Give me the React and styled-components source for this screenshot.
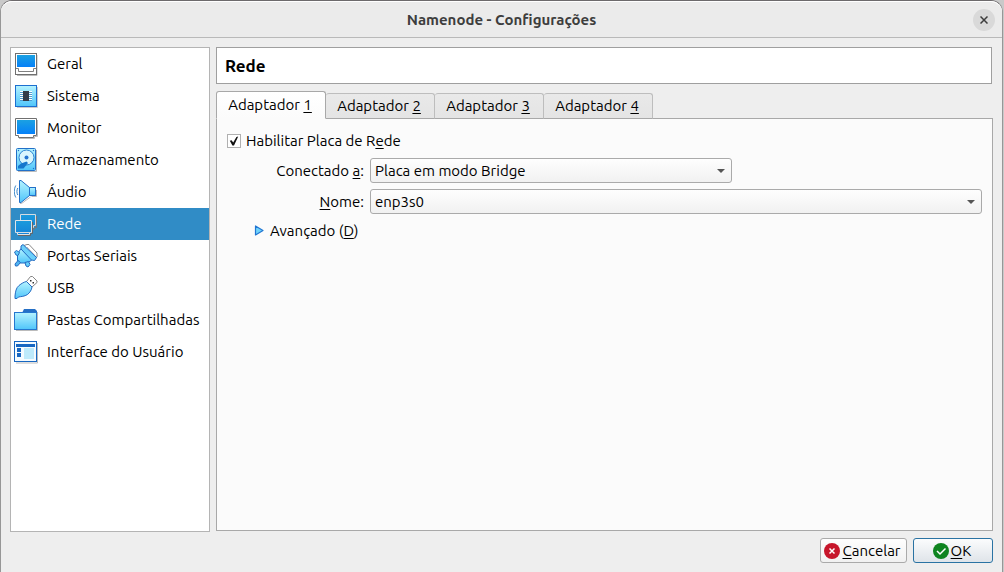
import React, { useState } from "react";
import styled, { createGlobalStyle } from "styled-components";

const GlobalStyle = createGlobalStyle`
  *, *::before, *::after { box-sizing: border-box; }
  body { margin: 0; background: #c9c9c9; }
  body, button, select, input {
    font-family: Ubuntu, "Noto Sans", sans-serif;
    font-size: 15px;
    line-height: 20px;
    color: #000;
  }
`;

const Dialog = styled.main`
  display: flex;
  flex-direction: column;
  min-height: 100vh;
  margin-right: 1px;
  background: #eeeeee;
  border: 1px solid #979797;
  border-top-color: #6d6a6c;
  border-bottom: 0;
  border-radius: 12px 12px 0 0;
`;

const TitleBar = styled.header`
  display: grid;
  grid-template-columns: 1fr auto 1fr;
  align-items: center;
  height: 37px;
  padding: 0 7px;
  background: #ebebeb;
  border-top: 1px solid #fff;
  border-bottom: 1px solid #b9b9b9;
  border-radius: 11px 11px 0 0;
`;

const Title = styled.h1`
  grid-column: 2;
  margin: 0;
  font-size: 15px;
  line-height: 20px;
  font-weight: 700;
  color: #3d3d3d;
`;

const CloseButton = styled.button`
  justify-self: end;
  display: grid;
  place-items: center;
  width: 22px;
  height: 22px;
  padding: 0;
  border: 0;
  border-radius: 50%;
  background: #d9d9d9;
`;

const Body = styled.div`
  flex: 1;
  display: flex;
  gap: 6px;
  padding: 9px 9px 6px;
`;

const Sidebar = styled.nav`
  flex: 0 0 200px;
  background: #fff;
  border: 1px solid #b4b4b4;
`;

const NavList = styled.ul`
  list-style: none;
  margin: 0;
  padding: 0;
`;

const NavLink = styled.a`
  display: flex;
  align-items: center;
  gap: 9px;
  height: 32px;
  padding: 0 3px;
  line-height: 22px;
  white-space: nowrap;
  text-decoration: none;
  color: ${(p) => (p.$active ? "#fff" : "#000")};
  background: ${(p) => (p.$active ? "#308cc6" : "transparent")};

  svg { flex: none; }
`;

const Content = styled.section`
  flex: 1;
  min-width: 0;
  display: flex;
  flex-direction: column;
  gap: 7px;
`;

const PageHeading = styled.h2`
  margin: 0 1px 0 0;
  padding: 0 8px;
  height: 37px;
  line-height: 36px;
  font-size: 17px;
  font-weight: 700;
  background: #fff;
  border: 1px solid #9f9f9f;
`;

const TabArea = styled.div`
  flex: 1;
  display: flex;
  flex-direction: column;
`;

const TabList = styled.div`
  display: flex;
  align-items: flex-end;
  height: 28px;
  margin-bottom: -1px;
`;

const Tab = styled.button`
  position: relative;
  width: 109px;
  height: ${(p) => (p.$active ? 28 : 26)}px;
  padding: 0 2px 0 0;
  white-space: nowrap;
  background: ${(p) =>
    p.$active ? "linear-gradient(#fff, #fbfbfb)" : "linear-gradient(#e9e9e9, #e4e4e4)"};
  border: 1px solid ${(p) => (p.$active ? "#a8a8a8" : "#bdbdbd")};
  border-bottom-color: ${(p) => (p.$active ? "#fbfbfb" : "#a8a8a8")};
  border-left-width: ${(p) => (p.$active ? 1 : 0)}px;
  border-radius: 3px 3px 0 0;

  &:first-child { width: 110px; }
`;

const TabPanel = styled.div`
  flex: 1;
  padding: 12px 10px;
  margin-bottom: 1px;
  background: #fbfbfb;
  border: 1px solid #a8a8a8;
`;

const CheckRow = styled.label`
  display: flex;
  align-items: center;
  gap: 5px;
`;

const CheckBox = styled.input`
  appearance: none;
  display: grid;
  place-items: center;
  width: 14px;
  height: 14px;
  margin: 0;
  background: #fff;
  border: 1px solid #b0b0b0;

  &:checked::before {
    content: "";
    width: 10px;
    height: 10px;
    background: #111;
    clip-path: polygon(8% 48%, 26% 42%, 42% 66%, 74% 10%, 92% 4%, 50% 96%, 34% 96%);
  }
`;

const FieldGrid = styled.div`
  display: grid;
  grid-template-columns: 137px 1fr;
  align-items: center;
  gap: 6px;
  margin-top: 7px;
`;

const FieldLabel = styled.label`
  text-align: right;
`;

const SelectBox = styled.div`
  position: relative;
  width: ${(p) => p.$width};
  max-width: 100%;

  &::after {
    content: "";
    position: absolute;
    right: 7px;
    top: 11px;
    border: 4px solid transparent;
    border-top-color: #555;
    border-bottom: 0;
    pointer-events: none;
  }
`;

const Select = styled.select`
  appearance: none;
  display: block;
  width: 100%;
  height: 25px;
  padding: 0 20px 0 4px;
  background: linear-gradient(#fefefe, #f1f1f1);
  border: 1px solid #aaa;
  border-radius: 3px;
`;

const Disclosure = styled.button`
  display: flex;
  align-items: center;
  gap: 6px;
  margin: 7px 0 0 27px;
  padding: 0;
  background: none;
  border: 0;
`;

const Footer = styled.footer`
  display: flex;
  justify-content: flex-end;
  gap: 6px;
  padding: 0 9px 9px;
`;

const ActionButton = styled.button`
  display: flex;
  align-items: center;
  justify-content: center;
  gap: 2px;
  min-width: ${(p) => (p.$primary ? 80 : 87)}px;
  height: 25px;
  padding: 0 5px 0 3px;
  background: ${(p) =>
    p.$primary ? "linear-gradient(#fbfcfd, #dfe4e9)" : "linear-gradient(#fefefe, #f1f1f1)"};
  border: 1px solid ${(p) => (p.$primary ? "#2a73a3" : "#aaa")};
  border-radius: 3px;
`;

const Key = styled.span`
  text-decoration: underline;
  text-decoration-thickness: 1px;
  text-underline-offset: 2px;
  text-decoration-skip-ink: none;
`;

function Icon({ children }) {
  return (
    <svg width="24" height="24" viewBox="0 0 24 24" fill="none" aria-hidden="true">
      {children}
    </svg>
  );
}

function Gradients() {
  return (
    <svg width="0" height="0" style={{ position: "absolute" }} aria-hidden="true">
      <defs>
        <linearGradient id="screen" x1="0" y1="0" x2="0" y2="1">
          <stop offset="0" stopColor="#1ba1e2" />
          <stop offset="1" stopColor="#0580f8" />
        </linearGradient>
        <linearGradient id="aqua" x1="0" y1="0" x2="0" y2="1">
          <stop offset="0" stopColor="#b5f3ff" />
          <stop offset="1" stopColor="#4fc5fa" />
        </linearGradient>
        <linearGradient id="dim" x1="0" y1="0" x2="0" y2="1">
          <stop offset="0" stopColor="#1c9bdc" />
          <stop offset="1" stopColor="#1583d8" />
        </linearGradient>
      </defs>
    </svg>
  );
}

const icons = {
  general: (
    <Icon>
      <path d="M23 3v20.5H3" stroke="#bbb" />
      <rect x="1.5" y="1.5" width="21" height="21" fill="#fff" stroke="#707070" />
      <rect x="3" y="3" width="18" height="12" fill="url(#screen)" />
      <path d="M2 16.5h2.5v3h15v-3H22" stroke="#808080" />
    </Icon>
  ),
  system: (
    <Icon>
      <path d="M23.5 3v20.5H3" stroke="#ccc" />
      <rect x="1.5" y="1.5" width="21" height="21" fill="url(#aqua)" stroke="#1c6fd0" />
      <path d="M6 7.5h12M6 9.5h12M6 11.5h12M6 13.5h12M6 15.5h12" stroke="#fff" />
      <path d="M6 8.5h12M6 10.5h12M6 12.5h12M6 14.5h12M6 16.5h12" stroke="#4d9bd0" />
      <rect x="9" y="7" width="6" height="10" fill="#333b49" />
    </Icon>
  ),
  display: (
    <Icon>
      <path d="M23.5 4v16.5h-3v2H5" stroke="#bbb" />
      <path d="M1.5 2.5h21v17h-3v2h-15v-2h-3z" fill="#fff" stroke="#707070" />
      <rect x="3" y="4" width="18" height="14" fill="url(#screen)" />
    </Icon>
  ),
  storage: (
    <Icon>
      <path d="M22.5 2v21.5H4" stroke="#bbb" />
      <rect x="2.5" y="0.5" width="19" height="22" rx="1" fill="url(#aqua)" stroke="#2270c8" />
      <circle cx="12.500" cy="9.500" r="7.500" fill="#d9f6fe" stroke="#2b83d2" />
      <circle cx="12.500" cy="9.500" r="2" fill="#2574d0" />
      <path d="M12.500 13.500l1.500 1.500-4.500 5.500H4v-2.500l3-2.500z" fill="#1677cd" />
      <circle cx="4.500" cy="2.500" r=".7" fill="#2270c8" />
      <circle cx="19.500" cy="2.500" r=".7" fill="#2270c8" />
      <circle cx="19.500" cy="20.500" r=".7" fill="#2270c8" />
    </Icon>
  ),
  audio: (
    <Icon>
      <path d="M16.5 17l-9 6.500H6M22.5 10v6.500h-5" stroke="#bbb" />
      <rect x="14.5" y="7.5" width="7" height="8" fill="url(#aqua)" stroke="#2270c8" />
      <path d="M5.5.5h1.500l8.500 7v8l-8.500 7H5.500z" fill="url(#aqua)" stroke="#2270c8" />
      <path d="M3.8 8c-1.200 2-1.200 5 0 7M1.800 5.500c-2 3.500-2 8.500 0 12" stroke="#3585ca" />
    </Icon>
  ),
  network: (
    <Icon>
      <path d="M22.5 4v11.500h-2v1.500h-3" stroke="#777" />
      <path d="M6.5 2.500h15v11h-2v2h-11v-2h-2z" fill="url(#dim)" stroke="#d4dce2" />
      <path d="M18.5 10v11.500h-2v2H4" stroke="#666" />
      <path d="M1.5 8.500h16v12h-2v2h-12v-2h-2z" fill="url(#dim)" stroke="#e0e5e9" />
      <path d="M2 20.500h15" stroke="#d5dde3" />
    </Icon>
  ),
  serial: (
    <Icon>
      <path d="M10 1.500l3-1h2l8 8.500v4l-2 2z" fill="#fff" stroke="#8a8a8a" />
      <path d="M13 3l8 8.500" stroke="#bbb" />
      <path d="M3.500 10l3.500-5.500 11.500 11-5 3.500H6.500L3.500 17z" fill="url(#aqua)" stroke="#246bc2" />
      <path d="M7 2l2-1.500L22.500 13.500 20.500 16.500 17.500 16 7 5z" fill="#6dd0fa" stroke="#246bc2" />
      <path d="M.5 8l2-1.500 3 2-1.500 3-2-.5zM11 18.500l3.500-1 1.500 3-2 2.500-2-1z" fill="#65cef9" stroke="#246bc2" />
      <path d="M1 20l3-3.500 2.500 2L3.500 22h-2z" fill="#4fb4f0" stroke="#246bc2" />
    </Icon>
  ),
  usb: (
    <Icon>
      <path d="M12.5 5.500l4-5h2l4.500 4.500v1.500l-5 4.500z" fill="#fff" stroke="#858585" />
      <rect x="16" y="4" width="1.500" height="1.500" fill="#333" />
      <rect x="18.500" y="6" width="1.500" height="1.500" fill="#333" />
      <path d="M1 22.500v-2.500C1.500 15.500 2 12 5 9.500 7.500 7.500 10 6 12.500 5.500l5.500 5.500c-.500 3-2 5.500-4.500 7.500-3 2-6.500 2-9 2.500L3 22.500z" fill="url(#aqua)" stroke="#246bc2" />
    </Icon>
  ),
  folder: (
    <Icon>
      <path d="M23.5 4v18.500H2" stroke="#bbb" />
      <path d="M8 5l2-4h11l2 2v2z" fill="#256fc5" />
      <rect x=".5" y="4.500" width="22" height="17" fill="url(#aqua)" stroke="#2577cf" />
    </Icon>
  ),
  interface: (
    <Icon>
      <path d="M23.5 3v20H2" stroke="#bbb" />
      <rect x=".5" y="1.500" width="22" height="20" fill="#f4fbff" stroke="#1767c2" />
      <rect x="2" y="4" width="19" height="3" fill="#1767c2" />
      <rect x="3" y="8" width="4" height="4" fill="#1767c2" />
      <rect x="3" y="13" width="4" height="4" fill="#1767c2" />
      <rect x="10" y="8" width="10" height="11" fill="#bdeafb" />
    </Icon>
  ),
};

const sections = [
  ["general", "Geral"],
  ["system", "Sistema"],
  ["display", "Monitor"],
  ["storage", "Armazenamento"],
  ["audio", "Áudio"],
  ["network", "Rede"],
  ["serial", "Portas Seriais"],
  ["usb", "USB"],
  ["folder", "Pastas Compartilhadas"],
  ["interface", "Interface do Usuário"],
];

export default function App() {
  const [tab, setTab] = useState(1);
  const [enabled, setEnabled] = useState(true);

  return (
    <>
      <GlobalStyle />
      <Gradients />
      <Dialog>
        <TitleBar>
          <Title>Namenode - Configurações</Title>
          <CloseButton type="button" aria-label="Fechar">
            <svg width="8" height="8" viewBox="0 0 8 8" aria-hidden="true">
              <path d="M.5.5l7 7M7.5.5l-7 7" stroke="#3d3d3d" strokeWidth="1.5" />
            </svg>
          </CloseButton>
        </TitleBar>
        <Body>
          <Sidebar>
            <NavList>
              {sections.map(([id, label]) => (
                <li key={id}>
                  <NavLink
                    href={`#${id}`}
                    $active={id === "network"}
                    aria-current={id === "network" ? "page" : undefined}
                  >
                    {icons[id]}
                    {label}
                  </NavLink>
                </li>
              ))}
            </NavList>
          </Sidebar>
          <Content>
            <PageHeading>Rede</PageHeading>
            <TabArea>
              <TabList role="tablist">
                {[1, 2, 3, 4].map((n) => (
                  <Tab
                    key={n}
                    type="button"
                    role="tab"
                    aria-selected={tab === n}
                    $active={tab === n}
                    onClick={() => setTab(n)}
                  >
                    Adaptador <Key>{n}</Key>
                  </Tab>
                ))}
              </TabList>
              <TabPanel role="tabpanel">
                <CheckRow>
                  <CheckBox
                    type="checkbox"
                    checked={enabled}
                    onChange={(e) => setEnabled(e.target.checked)}
                  />
                  <span>
                    Habilitar Placa de R<Key>e</Key>de
                  </span>
                </CheckRow>
                <FieldGrid>
                  <FieldLabel htmlFor="attached">
                    Conectado <Key>a</Key>:
                  </FieldLabel>
                  <SelectBox $width="362px">
                    <Select id="attached">
                      <option>Placa em modo Bridge</option>
                    </Select>
                  </SelectBox>
                  <FieldLabel htmlFor="adapter-name">
                    <Key>N</Key>ome:
                  </FieldLabel>
                  <SelectBox $width="100%">
                    <Select id="adapter-name">
                      <option>enp3s0</option>
                    </Select>
                  </SelectBox>
                </FieldGrid>
                <Disclosure type="button" aria-expanded="false">
                  <svg width="10" height="12" viewBox="0 0 10 12" aria-hidden="true">
                    <path d="M1.5 1v9L9 5.5z" fill="#6fd3fb" stroke="#2176d2" strokeWidth="1.2" strokeLinejoin="round" />
                  </svg>
                  <span>
                    Avançado (<Key>D</Key>)
                  </span>
                </Disclosure>
              </TabPanel>
            </TabArea>
          </Content>
        </Body>
        <Footer>
          <ActionButton type="button">
            <svg width="16" height="16" viewBox="0 0 16 16" aria-hidden="true">
              <circle cx="8" cy="8" r="8" fill="#c7162b" />
              <path d="M5.5 5.5l5 5M10.5 5.5l-5 5" stroke="#fff" strokeWidth="1.5" />
            </svg>
            <span>
              <Key>C</Key>ancelar
            </span>
          </ActionButton>
          <ActionButton type="button" $primary>
            <svg width="16" height="16" viewBox="0 0 16 16" aria-hidden="true">
              <circle cx="8" cy="8" r="8" fill="#0e8420" />
              <path d="M4 8l3 3 5.500-5.500" fill="none" stroke="#fff" strokeWidth="1.5" />
            </svg>
            <span>
              <Key>O</Key>K
            </span>
          </ActionButton>
        </Footer>
      </Dialog>
    </>
  );
}
